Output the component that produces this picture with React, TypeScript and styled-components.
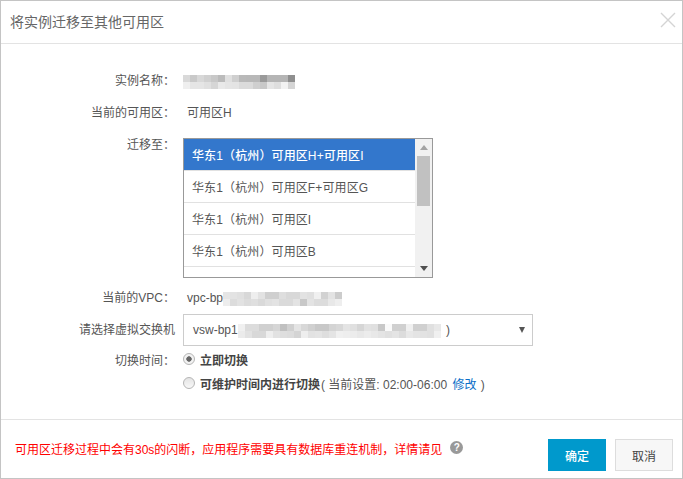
import React from "react";
import styled, { createGlobalStyle } from "styled-components";

const Global = createGlobalStyle`
  html, body { margin: 0; padding: 0; background: #fff; }
  body { font-family: "Liberation Sans", "Noto Sans CJK SC", sans-serif; font-size: 12px; color: #555; }
`;

const Dialog = styled.div`
  box-sizing: border-box;
  width: 683px;
  height: 479px;
  border: 1px solid #c4c4c4;
  display: flex;
  flex-direction: column;
  background: #fff;
`;
const Header = styled.header`
  box-sizing: border-box;
  height: 43px;
  flex: none;
  border-bottom: 1px solid #e3e3e3;
  display: flex;
  align-items: center;
  justify-content: space-between;
  padding: 0 6px 0 9px;
`;
const Title = styled.h1`
  margin: 0;
  font-size: 14px;
  font-weight: 400;
  line-height: 38px;
  color: #666;
`;
const Close = styled.button`
  border: 0;
  background: none;
  padding: 0;
  width: 16px;
  height: 16px;
  margin-top: -4px;
  display: flex;
  color: #d4d4d4;
`;
const Body = styled.main`
  flex: 1;
  padding-top: 21px;
  display: flex;
  flex-direction: column;
`;
const Row = styled.div<{ $h: number; $mt?: number }>`
  display: grid;
  grid-template-columns: 174px 1fr;
  column-gap: 8px;
  height: ${(p) => p.$h}px;
  margin-top: ${(p) => p.$mt ?? 0}px;
  line-height: ${(p) => p.$h}px;
  align-items: start;
`;
const Label = styled.label<{ $lh?: number }>`
  text-align: right;
  white-space: nowrap;
  color: #555;
  ${(p) => (p.$lh ? `line-height:${p.$lh}px;` : "")}
`;
const Value = styled.div<{ $indent?: number }>`
  display: flex;
  align-items: center;
  height: 100%;
  padding-left: ${(p) => p.$indent ?? 0}px;
  white-space: nowrap;
  color: #555;
`;
const ListBox = styled.div`
  box-sizing: border-box;
  width: 250px;
  height: 140px;
  border: 1px solid #999;
  display: flex;
  overflow: hidden;
`;
const Options = styled.ul`
  list-style: none;
  margin: 0;
  padding: 0;
  flex: 1;
`;
const Option = styled.li<{ $selected?: boolean }>`
  box-sizing: border-box;
  height: 32px;
  line-height: 34px;
  padding-left: 8px;
  letter-spacing: 0.12px;
  border-bottom: 1px solid #e1e1e1;
  background: ${(p) => (p.$selected ? "#3377cc" : "#fff")};
  color: ${(p) => (p.$selected ? "#fff" : "#555")};
  font-weight: ${(p) => (p.$selected ? 500 : 400)};
  white-space: nowrap;
`;
const Track = styled.div`
  width: 17px;
  flex: none;
  background: #f1f1f1;
  display: flex;
  flex-direction: column;
  align-items: center;
  justify-content: space-between;
`;
const TrackTop = styled.div`
  display: flex;
  flex-direction: column;
  align-items: center;
  width: 100%;
`;
const ArrowBtn = styled.div<{ $up?: boolean; $dark?: boolean }>`
  width: 0;
  height: 0;
  margin: ${(p) => (p.$up ? "6px 0 6px" : "0 0 6px")};
  border-left: 4px solid transparent;
  border-right: 4px solid transparent;
  ${(p) =>
    p.$up
      ? `border-bottom: 5px solid ${p.$dark ? "#505050" : "#a3a3a3"};`
      : `border-top: 5px solid ${p.$dark ? "#505050" : "#a3a3a3"};`}
`;
const Thumb = styled.div`
  width: 13px;
  height: 50px;
  background: #c1c1c1;
`;
const SelectBox = styled.div`
  box-sizing: border-box;
  width: 350px;
  height: 32px;
  border: 1px solid #ccc;
  display: flex;
  align-items: center;
  padding: 0 7px 0 9px;
  color: #555;
  justify-content: space-between;
`;
const SelectText = styled.span`
  display: flex;
  align-items: center;
  white-space: nowrap;
`;
const Caret = styled.span`
  width: 0;
  height: 0;
  border-left: 3px solid transparent;
  border-right: 3px solid transparent;
  border-top: 6px solid #555;
`;
const RadioLine = styled.div`
  display: flex;
  align-items: center;
  height: 100%;
  white-space: nowrap;
`;
const Radio = styled.span<{ $on?: boolean }>`
  box-sizing: border-box;
  width: 12px;
  height: 12px;
  flex: none;
  margin: -5px 5px 0 0;
  border-radius: 50%;
  border: 1px solid #b5b5b5;
  background: ${(p) =>
    p.$on
      ? "radial-gradient(circle, #666 0 2.4px, #f2f2f2 3px)"
      : "linear-gradient(#e4e4e4, #f8f8f8)"};
`;
const Strong = styled.strong`
  font-weight: 700;
  color: #444;
`;
const Note = styled.span`
  color: #555;
  margin-left: 1px;
`;
const EditLink = styled.a`
  color: #0a6fc8;
  text-decoration: none;
  margin: 0 1px 0 2px;
`;
const Footer = styled.footer`
  box-sizing: border-box;
  height: 59px;
  flex: none;
  border-top: 1px solid #e3e3e3;
  padding: 19px 9px 0 14px;
  display: flex;
  align-items: flex-start;
`;
const Warning = styled.p`
  margin: 0;
  flex: 1;
  display: flex;
  align-items: center;
  height: 18px;
  color: #f00;
  white-space: nowrap;
`;
const Help = styled.span`
  width: 13px;
  height: 13px;
  margin: -1px 0 0 8px;
  border-radius: 50%;
  background: #999;
  color: #fff;
  font-size: 10px;
  font-weight: 700;
  line-height: 13px;
  text-align: center;
`;
const Btn = styled.button<{ $primary?: boolean }>`
  box-sizing: border-box;
  width: 58px;
  height: 32px;
  margin-left: 9px;
  font: inherit;
  padding: 0;
  border: 1px solid ${(p) => (p.$primary ? "#0099cc" : "#ddd")};
  background: ${(p) => (p.$primary ? "#0099cc" : "#f7f7f7")};
  color: ${(p) => (p.$primary ? "#fff" : "#444")};
  font-weight: ${(p) => (p.$primary ? 500 : 400)};
`;
const MosaicSvg = styled.svg`
  display: block;
  flex: none;
  margin-top: 2px;
`;
const CloseParen = styled.span`
  margin-left: 2px;
`;

const Mosaic = ({ rows, cell = 7 }: { rows: string[][]; cell?: number }) => (
  <MosaicSvg width={rows[0].length * cell} height={rows.length * cell}>
    {rows.map((r, y) =>
      r.map((c, x) => (
        <rect key={`${x}-${y}`} x={x * cell} y={y * cell} width={cell} height={cell} fill={`#${c}${c}${c}`} />
      ))
    )}
  </MosaicSvg>
);

const sp = (s: string) => s.split(" ");
const nameRows = [
  sp("d9 c9 d8 d0 c8 bb e0 cf b9 b8 b8 9a b5 b5 b5 8f"),
  sp("ef e5 e5 e0 d6 e9 e5 e4 db db cf c8 e5 de f2 d5"),
];
const vpcRows = [
  sp("e5 e3 e0 d8 ee e2 cf cf de d8 d8 e3 e0 f0 d2 e3 cc"),
  sp("ed dc e2 dc df d9 e0 e3 da da e3 c8 e3 dc dc e8 ee"),
];
const vswRows = [
  sp("f0 dc dc d0 d0 d6 c0 d0 e4 d8 d0 c8 c8 d4 d8 e4 e0 d6 e2 e0 c8 fa d0 d0 f0 d0 d0 e0 e8"),
  sp("eb e2 d8 d8 ee e2 de dc d4 ee e2 e4 de e4 f0 ee ec e8 ec e8 e4 e0 e4 dc e8 e4 e2 e0 f0"),
];

const zones = ["华东1（杭州）可用区H+可用区I", "华东1（杭州）可用区F+可用区G", "华东1（杭州）可用区I", "华东1（杭州）可用区B"];

export default function App() {
  return (
    <>
      <Global />
      <Dialog>
        <Header>
          <Title>将实例迁移至其他可用区</Title>
          <Close aria-label="关闭">
            <svg width="16" height="16" viewBox="0 0 16 16" fill="none" stroke="currentColor" strokeWidth="1.4">
              <path d="M1 1l14 14M15 1L1 15" />
            </svg>
          </Close>
        </Header>
        <Body>
          <Row $h={32}>
            <Label>实例名称：</Label>
            <Value><Mosaic rows={nameRows} /></Value>
          </Row>
          <Row $h={32}>
            <Label>当前的可用区：</Label>
            <Value $indent={4}>可用区H</Value>
          </Row>
          <Row $h={140} $mt={9}>
            <Label $lh={14}>迁移至：</Label>
            <ListBox>
              <Options>
                {zones.map((z, i) => (
                  <Option key={z} $selected={i === 0}>{z}</Option>
                ))}
              </Options>
              <Track>
                <TrackTop>
                  <ArrowBtn $up />
                  <Thumb />
                </TrackTop>
                <ArrowBtn $dark />
              </Track>
            </ListBox>
          </Row>
          <Row $h={32} $mt={4}>
            <Label>当前的VPC：</Label>
            <Value $indent={4}>vpc-bp<Mosaic rows={vpcRows} /></Value>
          </Row>
          <Row $h={32}>
            <Label>请选择虚拟交换机</Label>
            <SelectBox>
              <SelectText>vsw-bp1<Mosaic rows={vswRows} /><CloseParen>&nbsp;)</CloseParen></SelectText>
              <Caret />
            </SelectBox>
          </Row>
          <Row $h={24} $mt={3}>
            <Label>切换时间：</Label>
            <RadioLine><Radio $on /><Strong>立即切换</Strong></RadioLine>
          </Row>
          <Row $h={24}>
            <span />
            <RadioLine>
              <Radio />
              <Strong>可维护时间内进行切换</Strong>
              <Note>( 当前设置: 02:00-06:00 <EditLink href="#">修改</EditLink> )</Note>
            </RadioLine>
          </Row>
        </Body>
        <Footer>
          <Warning>
            可用区迁移过程中会有30s的闪断，应用程序需要具有数据库重连机制，详情请见
            <Help>?</Help>
          </Warning>
          <Btn $primary>确定</Btn>
          <Btn>取消</Btn>
        </Footer>
      </Dialog>
    </>
  );
}
